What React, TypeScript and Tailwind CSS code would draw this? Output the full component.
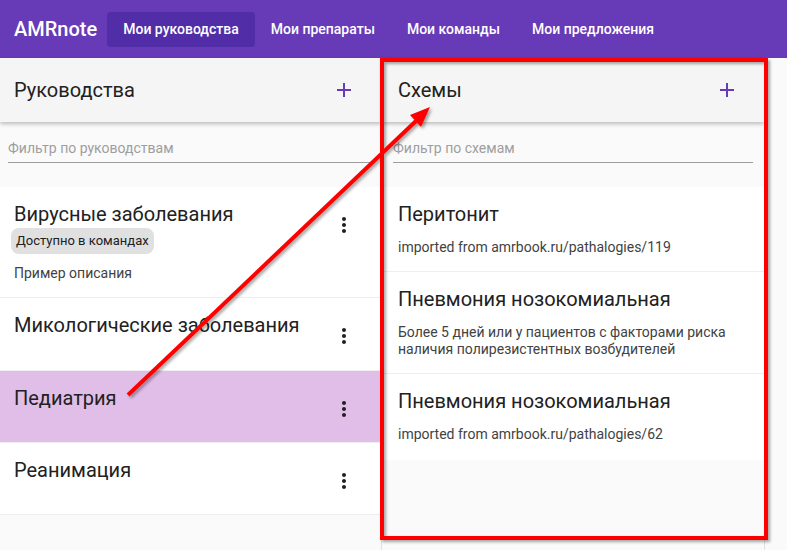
import React from 'react';

const navItems = ['Мои руководства', 'Мои препараты', 'Мои команды', 'Мои предложения'];

interface Guide {
  id: number;
  title: string;
  chip?: string;
  desc?: string;
  h: string;
  selected?: boolean;
}

const guides: Guide[] = [
  { id: 1, title: 'Вирусные заболевания', chip: 'Доступно в командах', desc: 'Пример описания', h: 'h-[111px]' },
  { id: 2, title: 'Микологические заболевания', h: 'h-[73px]' },
  { id: 3, title: 'Педиатрия', h: 'h-[72px]', selected: true },
  { id: 4, title: 'Реанимация', h: 'h-[72px]' },
];

const schemes = [
  { id: 1, title: 'Перитонит', desc: 'imported from amrbook.ru/pathalogies/119', h: 'h-[85px]' },
  { id: 2, title: 'Пневмония нозокомиальная', desc: 'Более 5 дней или у пациентов с факторами риска наличия полирезистентных возбудителей', h: 'h-[102px]' },
  { id: 3, title: 'Пневмония нозокомиальная', desc: 'imported from amrbook.ru/pathalogies/62', h: 'h-[86px]' },
];

function AddIcon() {
  return (
    <svg width="24" height="24" viewBox="0 0 24 24" fill="#673ab7">
      <path d="M19 13h-6v6h-2v-6H5v-2h6V5h2v6h6v2z" />
    </svg>
  );
}

function MoreIcon() {
  return (
    <svg width="24" height="24" viewBox="0 0 24 24" fill="#212121">
      <path d="M12 8c1.1 0 2-.9 2-2s-.9-2-2-2-2 .9-2 2 .9 2 2 2zm0 2c-1.1 0-2 .9-2 2s.9 2 2 2 2-.9 2-2-.9-2-2-2zm0 6c-1.1 0-2 .9-2 2s.9 2 2 2 2-.9 2-2-.9-2-2-2z" />
    </svg>
  );
}

function PanelHeader({ title, pl }: { title: string; pl: string }) {
  return (
    <div className={`relative z-10 h-[64px] shrink-0 bg-[#f5f5f5] shadow-[0_2px_4px_rgba(0,0,0,0.25)] flex items-center justify-between pr-[13px] ${pl}`}>
      <span className="text-[20px] text-[#212121]">{title}</span>
      <button className="w-12 h-12 flex items-center justify-center"><AddIcon /></button>
    </div>
  );
}

export default function App() {
  return (
    <div className="relative w-[787px] h-[550px] overflow-hidden bg-[#fafafa] flex flex-col" style={{ fontFamily: 'Roboto, "Noto Sans", sans-serif' }}>
      <header className="h-[58px] shrink-0 bg-[#673ab7] flex items-center px-[14px] text-white">
        <span className="text-[20px] font-medium mr-[10px]">AMRnote</span>
        <nav className="flex items-center">
          {navItems.map((n, i) => (
            <button key={n} className={`h-[35px] px-4 rounded-[4px] text-[14px] font-medium ${i === 0 ? 'bg-[#512da8]' : ''}`}>{n}</button>
          ))}
        </nav>
      </header>

      <div className="flex flex-1 min-h-0">
        <section className="w-[382px] shrink-0 flex flex-col border-r border-[#e0e0e0]">
          <PanelHeader title="Руководства" pl="pl-[14px]" />
          <div className="h-[65px] shrink-0 pl-2 pr-[9px] pt-[18px]">
            <div className="border-b border-[#9e9e9e] h-[23px] text-[14px] text-[#9e9e9e] leading-[17px]">Фильтр по руководствам</div>
          </div>
          <div className="flex flex-col">
            {guides.map(g => (
              <div key={g.id} className={`${g.h} relative border-b border-[#eeeeee] pl-[14px] pt-[15px] ${g.selected ? 'bg-[#e1bee7]' : 'bg-white'}`}>
                <div className="text-[20px] leading-[24px] text-[#212121]">{g.title}</div>
                {g.chip && (
                  <span className="inline-flex items-center h-[26px] mt-[2px] -ml-[3px] px-[5px] rounded-[8px] bg-[#e0e0e0] text-[13px] text-[#212121]">{g.chip}</span>
                )}
                {g.desc && <div className="mt-[11px] text-[14px] leading-[17px] text-[#424242]">{g.desc}</div>}
                <div className="absolute right-[25px] top-[26px]"><MoreIcon /></div>
              </div>
            ))}
          </div>
        </section>

        <section className="w-[383px] shrink-0 flex flex-col border-r border-[#e0e0e0]">
          <PanelHeader title="Схемы" pl="pl-4" />
          <div className="h-[65px] shrink-0 pl-[11px] pr-[11px] pt-[18px]">
            <div className="border-b border-[#9e9e9e] h-[23px] text-[14px] text-[#9e9e9e] leading-[17px]">Фильтр по схемам</div>
          </div>
          <div className="flex flex-col">
            {schemes.map((s, i) => (
              <div key={s.id} className={`${s.h} bg-white pl-4 pr-6 pt-[15px] ${i < schemes.length - 1 ? 'border-b border-[#eeeeee]' : ''}`}>
                <div className="text-[20px] leading-[24px] text-[#212121]">{s.title}</div>
                <div className="mt-[13px] text-[14px] leading-[17px] text-[#424242]">{s.desc}</div>
              </div>
            ))}
          </div>
        </section>
      </div>

      <svg className="absolute inset-0 pointer-events-none z-20" width="787" height="550">
        <defs>
          <filter id="sh" x="-10%" y="-10%" width="120%" height="120%">
            <feDropShadow dx="2" dy="2" stdDeviation="1.5" floodColor="#000" floodOpacity="0.35" />
          </filter>
        </defs>
        <g filter="url(#sh)">
          <rect x="382" y="60" width="384" height="478" fill="none" stroke="#ff0000" strokeWidth="4" />
          <line x1="128" y1="395" x2="416" y2="121" stroke="#ff0000" strokeWidth="4" />
          <polygon points="430,107 410,115 421,127" fill="#ff0000" />
        </g>
      </svg>
    </div>
  );
}
